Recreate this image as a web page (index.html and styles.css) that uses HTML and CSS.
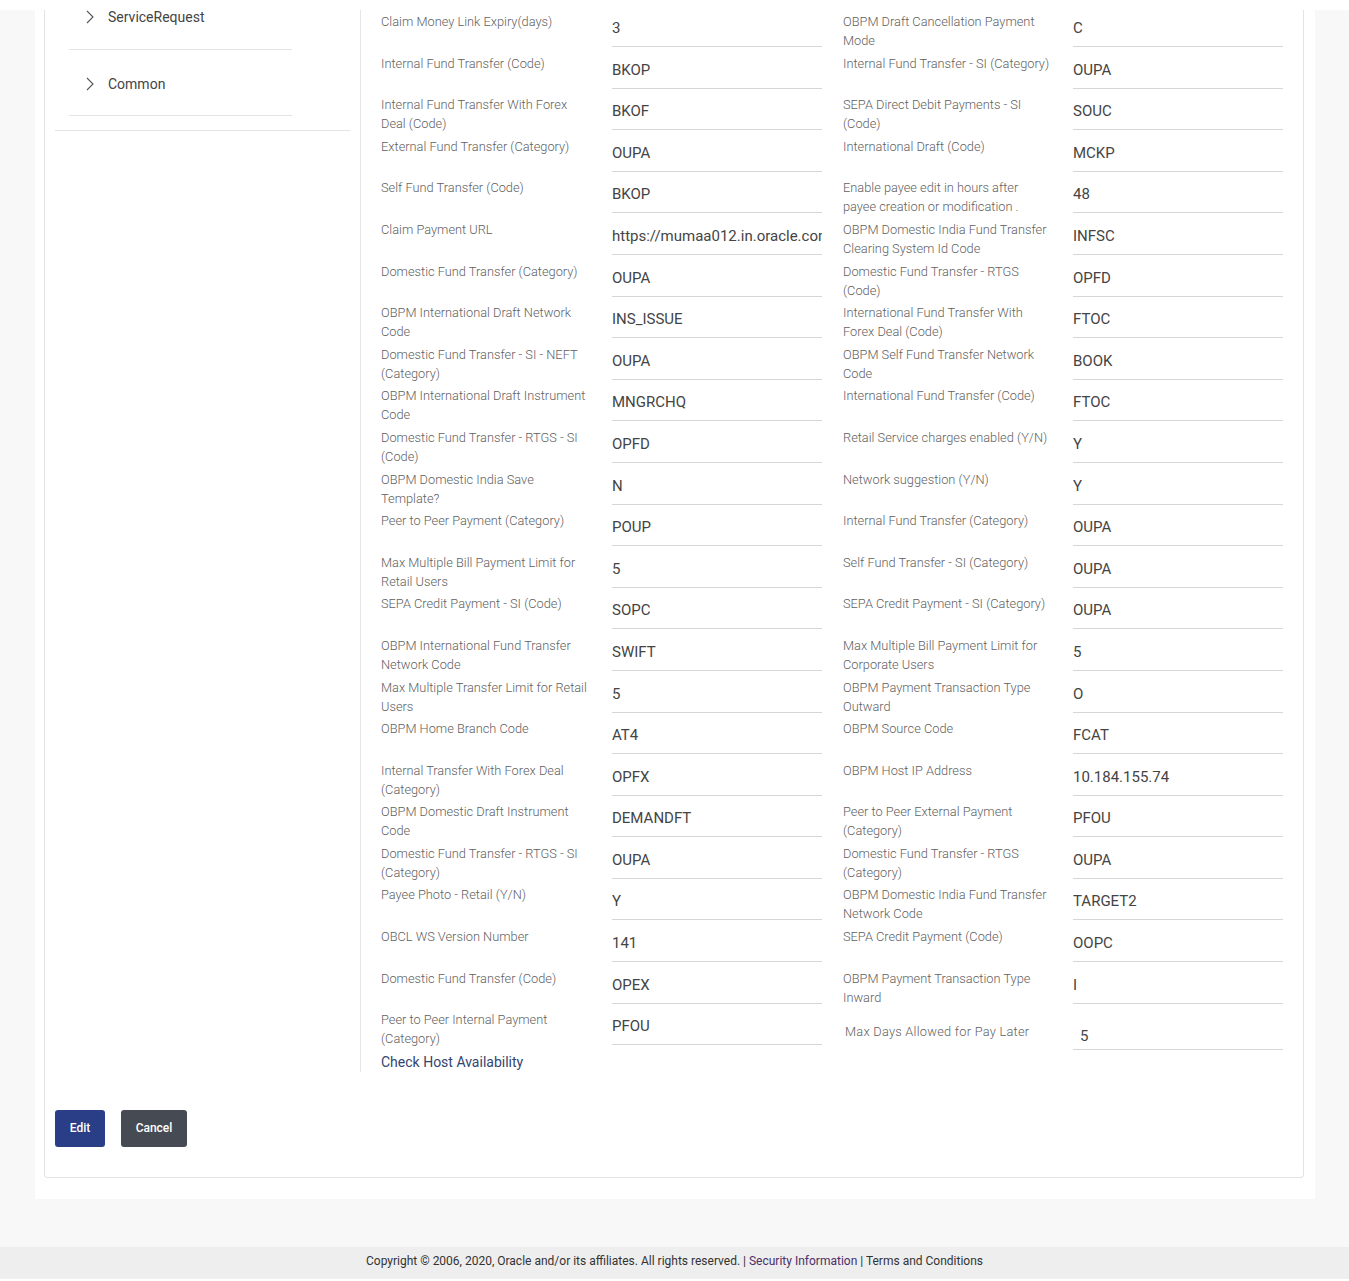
FILE: index.html
```html
<!DOCTYPE html>
<html lang="en">
<head>
<meta charset="utf-8">
<title>System Configuration - Payments</title>
<link rel="stylesheet" href="styles.css">
</head>
<body>
<div class="page">
  <div class="top-strip"></div>
  <div class="panel">
    <div class="card">
      <div class="card-body">
        <nav class="side-nav">
          <ul class="nav-list">
            <li class="nav-item">
              <svg class="chev" width="8" height="14" viewBox="0 0 8 14"><polyline points="1,1 7,7 1,13" fill="none" stroke="#555" stroke-width="1.1"/></svg>
              <span>ServiceRequest</span>
            </li>
            <li class="nav-item">
              <svg class="chev" width="8" height="14" viewBox="0 0 8 14"><polyline points="1,1 7,7 1,13" fill="none" stroke="#555" stroke-width="1.1"/></svg>
              <span>Common</span>
            </li>
          </ul>
          <div class="nav-rule"></div>
        </nav>
        <section class="content">
          <div class="grid">
            <div class="lbl">Claim Money Link Expiry(days)</div><div class="val">3</div>
            <div class="lbl">OBPM Draft Cancellation Payment Mode</div><div class="val">C</div>

            <div class="lbl">Internal Fund Transfer (Code)</div><div class="val">BKOP</div>
            <div class="lbl">Internal Fund Transfer - SI (Category)</div><div class="val">OUPA</div>

            <div class="lbl">Internal Fund Transfer With Forex Deal (Code)</div><div class="val">BKOF</div>
            <div class="lbl">SEPA Direct Debit Payments - SI (Code)</div><div class="val">SOUC</div>

            <div class="lbl">External Fund Transfer (Category)</div><div class="val">OUPA</div>
            <div class="lbl">International Draft (Code)</div><div class="val">MCKP</div>

            <div class="lbl">Self Fund Transfer (Code)</div><div class="val">BKOP</div>
            <div class="lbl">Enable payee edit in hours after payee creation or modification .</div><div class="val">48</div>

            <div class="lbl">Claim Payment URL</div><div class="val"><span class="clip">https://mumaa012.in.oracle.com</span></div>
            <div class="lbl">OBPM Domestic India Fund Transfer Clearing System Id Code</div><div class="val">INFSC</div>

            <div class="lbl">Domestic Fund Transfer (Category)</div><div class="val">OUPA</div>
            <div class="lbl">Domestic Fund Transfer - RTGS (Code)</div><div class="val">OPFD</div>

            <div class="lbl">OBPM International Draft Network Code</div><div class="val">INS_ISSUE</div>
            <div class="lbl">International Fund Transfer With Forex Deal (Code)</div><div class="val">FTOC</div>

            <div class="lbl">Domestic Fund Transfer - SI - NEFT (Category)</div><div class="val">OUPA</div>
            <div class="lbl">OBPM Self Fund Transfer Network Code</div><div class="val">BOOK</div>

            <div class="lbl">OBPM International Draft Instrument Code</div><div class="val">MNGRCHQ</div>
            <div class="lbl">International Fund Transfer (Code)</div><div class="val">FTOC</div>

            <div class="lbl">Domestic Fund Transfer - RTGS - SI (Code)</div><div class="val">OPFD</div>
            <div class="lbl">Retail Service charges enabled (Y/N)</div><div class="val">Y</div>

            <div class="lbl">OBPM Domestic India Save Template?</div><div class="val">N</div>
            <div class="lbl">Network suggestion (Y/N)</div><div class="val">Y</div>

            <div class="lbl">Peer to Peer Payment (Category)</div><div class="val">POUP</div>
            <div class="lbl">Internal Fund Transfer (Category)</div><div class="val">OUPA</div>

            <div class="lbl">Max Multiple Bill Payment Limit for Retail Users</div><div class="val">5</div>
            <div class="lbl">Self Fund Transfer - SI (Category)</div><div class="val">OUPA</div>

            <div class="lbl">SEPA Credit Payment - SI (Code)</div><div class="val">SOPC</div>
            <div class="lbl">SEPA Credit Payment - SI (Category)</div><div class="val">OUPA</div>

            <div class="lbl">OBPM International Fund Transfer Network Code</div><div class="val">SWIFT</div>
            <div class="lbl">Max Multiple Bill Payment Limit for Corporate Users</div><div class="val">5</div>

            <div class="lbl">Max Multiple Transfer Limit for Retail Users</div><div class="val">5</div>
            <div class="lbl">OBPM Payment Transaction Type Outward</div><div class="val">O</div>

            <div class="lbl">OBPM Home Branch Code</div><div class="val">AT4</div>
            <div class="lbl">OBPM Source Code</div><div class="val">FCAT</div>

            <div class="lbl">Internal Transfer With Forex Deal (Category)</div><div class="val">OPFX</div>
            <div class="lbl">OBPM Host IP Address</div><div class="val">10.184.155.74</div>

            <div class="lbl">OBPM Domestic Draft Instrument Code</div><div class="val">DEMANDFT</div>
            <div class="lbl">Peer to Peer External Payment (Category)</div><div class="val">PFOU</div>

            <div class="lbl">Domestic Fund Transfer - RTGS - SI (Category)</div><div class="val">OUPA</div>
            <div class="lbl">Domestic Fund Transfer - RTGS (Category)</div><div class="val">OUPA</div>

            <div class="lbl">Payee Photo - Retail (Y/N)</div><div class="val">Y</div>
            <div class="lbl">OBPM Domestic India Fund Transfer Network Code</div><div class="val">TARGET2</div>

            <div class="lbl">OBCL WS Version Number</div><div class="val">141</div>
            <div class="lbl">SEPA Credit Payment (Code)</div><div class="val">OOPC</div>

            <div class="lbl">Domestic Fund Transfer (Code)</div><div class="val">OPEX</div>
            <div class="lbl">OBPM Payment Transaction Type Inward</div><div class="val">I</div>

            <div class="lbl">Peer to Peer Internal Payment (Category)</div><div class="val">PFOU</div>
            <div class="lbl lbl-shift">Max Days Allowed for Pay Later</div><div class="val val-shift">5</div>
          </div>
          <a class="check-host">Check Host Availability</a>
        </section>
      </div>
      <div class="actions">
        <button class="btn btn-primary" type="button">Edit</button>
        <button class="btn btn-secondary" type="button">Cancel</button>
      </div>
    </div>
  </div>
</div>
<footer class="footer">
  Copyright © 2006, 2020, Oracle and/or its affiliates. All rights reserved. | <span class="sec">Security Information</span> | Terms and Conditions
</footer>
</body>
</html>
```

FILE: styles.css
```css
html, body {
  margin: 0;
  padding: 0;
  background: #ffffff;
}

body {
  font-family: Roboto, "Liberation Sans", Arial, sans-serif;
  color: #333333;
}

.page {
  background: #f8f8f8;
  padding-bottom: 48px;
}

.top-strip {
  height: 10px;
  background: #ffffff;
}

.panel {
  margin-left: 35px;
  width: 1280px;
  box-sizing: border-box;
  background: #ffffff;
  padding: 0 11px 21px 9px;
}

.card {
  border: 1px solid #e3e3e3;
  border-top: none;
  border-radius: 0 0 4px 4px;
}

.card-body {
  display: flex;
  align-items: stretch;
}

.side-nav {
  flex: 0 0 316px;
  width: 316px;
  box-sizing: border-box;
  padding: 0 10px;
  border-right: 1px solid #e6e6e6;
}

.nav-list {
  list-style: none;
  margin: -26px 0 0 0;
  padding: 0 0 0 14px;
}

.nav-item {
  width: 223px;
  display: flex;
  align-items: center;
  padding: 23px 0 22px 0;
  line-height: 20px;
  border-bottom: 1px solid #e4e4e4;
  font-size: 14px;
  color: #444444;
}

.nav-item + .nav-item {
  padding-top: 24px;
  padding-bottom: 21px;
}

.chev {
  margin-left: 17px;
  margin-right: 14px;
  flex: 0 0 auto;
}

.nav-rule {
  margin-top: 14px;
  border-top: 1px solid #e4e4e4;
}

.content {
  flex: 1 1 auto;
  padding: 2px 0 0 20px;
}

.grid {
  display: grid;
  grid-template-columns: 231px 231px 230px 210px;
  grid-auto-rows: 41.6px;
}

.lbl {
  width: 210px;
  font-size: 12.8px;
  font-weight: 300;
  line-height: 19px;
  color: #5f5f5f;
}

.val {
  width: 210px;
  box-sizing: border-box;
  padding: 6px 0 8px 0;
  height: 35px;
  line-height: 20px;
  font-size: 15px;
  color: #444444;
  border-bottom: 1px solid #d6d6d6;
  overflow: hidden;
}

.clip {
  display: block;
  width: 210px;
  white-space: nowrap;
  overflow: hidden;
}

.lbl-shift {
  padding-top: 12px;
  padding-left: 2px;
  letter-spacing: 0.25px;
}

.val-shift {
  height: 40px;
  padding: 16px 0 3px 7px;
}

.check-host {
  display: block;
  font-size: 14px;
  line-height: 20px;
  color: #34456f;
  cursor: pointer;
}

.actions {
  display: flex;
  gap: 16px;
  padding: 38px 10px 30px 10px;
}

.btn {
  height: 37px;
  border: none;
  border-radius: 3px;
  font-family: Roboto, "Liberation Sans", Arial, sans-serif;
  font-size: 12px;
  font-weight: 500;
  color: #ffffff;
  padding: 0;
}

.btn-primary {
  width: 50px;
  background: #293e86;
}

.btn-secondary {
  width: 66px;
  background: #464b53;
}

.footer {
  height: 32px;
  box-sizing: border-box;
  background: #eeeeee;
  text-align: center;
  font-size: 12px;
  line-height: 28px;
  color: #333333;
}

.sec {
  color: #4a2f6a;
}
```
